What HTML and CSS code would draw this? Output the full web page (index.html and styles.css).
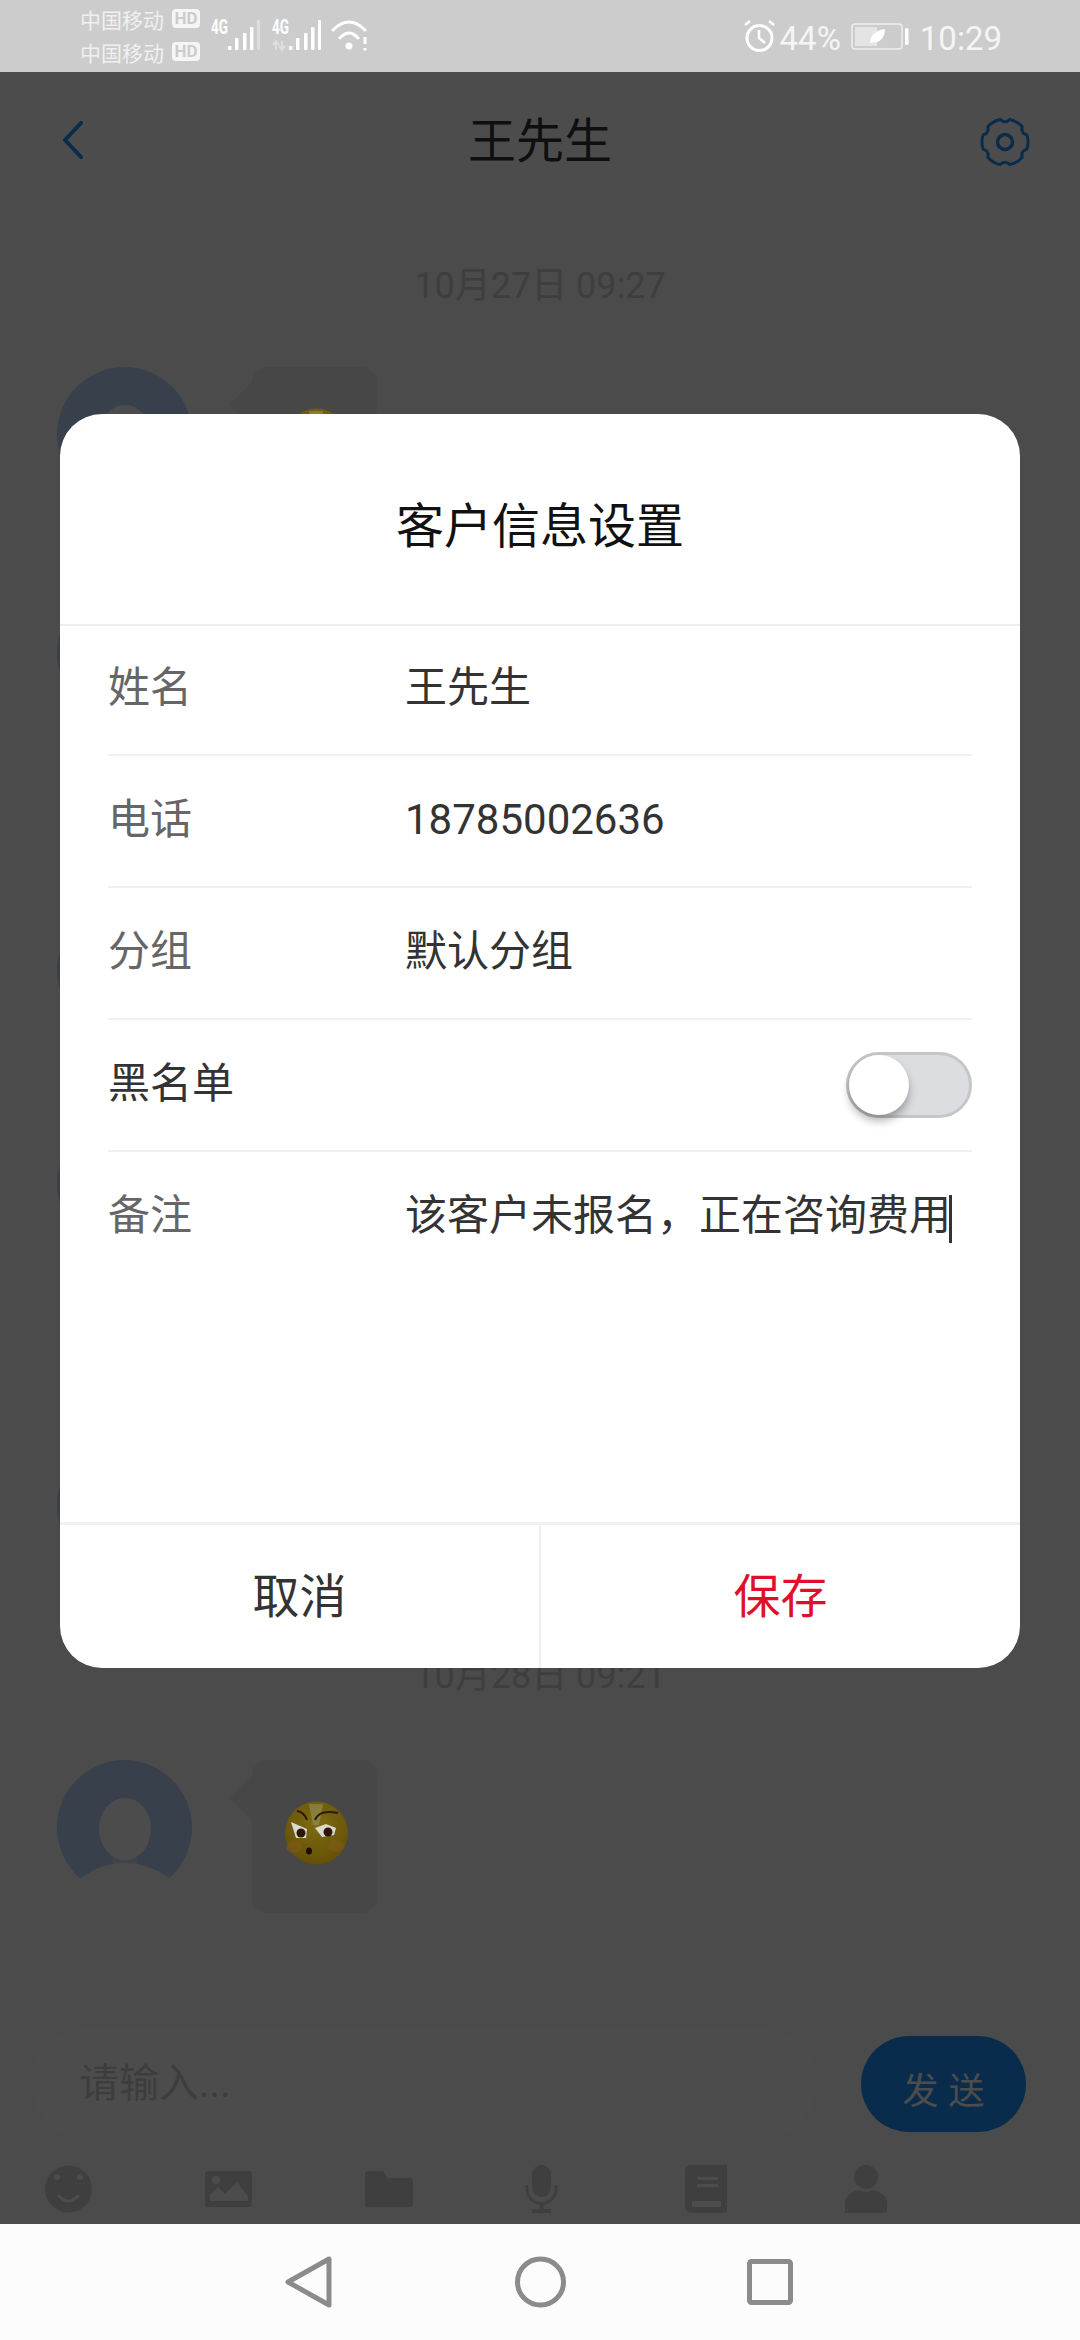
FILE: index.html
```html
<!DOCTYPE html>
<html lang="zh-CN">
<head>
  <meta charset="UTF-8">
  <meta name="viewport" content="width=device-width, initial-scale=1.0">
  <title>王先生</title>
  <link rel="stylesheet" href="styles.css">
</head>
<body>
  <!-- shared shapes -->
  <svg class="defs" width="0" height="0">
    <defs>
      <symbol id="avatar" viewBox="0 0 135 135">
        <circle cx="67.500" cy="67.500" r="67.500" fill="#bcd6ff"/>
        <rect x="56" y="90" width="24" height="20" fill="#d8e4f8"/>
        <ellipse cx="68" cy="69" rx="26" ry="31" fill="#fff"/>
        <path d="M23.500 118Q66 88 111.500 117V135H23.500Z" fill="#fafafa"/>
      </symbol>
      <radialGradient id="face" cx="50%" cy="35%" r="70%">
        <stop offset="0" stop-color="#7f6c12"/>
        <stop offset="1" stop-color="#614e05"/>
      </radialGradient>
      <symbol id="emoji" viewBox="0 0 63 64">
        <circle cx="31.500" cy="32" r="31.500" fill="url(#face)"/>
        <path d="M24 3H38L34 24H28Z" fill="#8f8a50" opacity=".7"/>
        <ellipse cx="9" cy="46" rx="8" ry="6" fill="#84591a" opacity=".5"/>
        <ellipse cx="51" cy="45" rx="8" ry="6" fill="#84591a" opacity=".5"/>
        <path d="M6 21L22 28L21 37H11Z" fill="#d9d9d0"/>
        <path d="M30 27L41 23L51 27L49 34L37 36Z" fill="#d9d9d0"/>
        <circle cx="16" cy="32" r="4.500" fill="#2e1606"/>
        <circle cx="43" cy="31" r="4.500" fill="#2e1606"/>
        <path d="M12 10Q19 11 22 19M30 19Q34 8 53 12" fill="none" stroke="#2e1a06" stroke-width="2"/>
        <ellipse cx="24" cy="50" rx="3" ry="3.500" fill="#1c0c04"/>
      </symbol>
    </defs>
  </svg>

  <div class="screen">
    <div class="status-bar">
      <div class="carriers">
        <div class="carrier">中国移动<span class="hd">HD</span></div>
        <div class="carrier">中国移动<span class="hd">HD</span></div>
      </div>
      <svg class="st-icon sim-one" width="49" height="72" viewBox="0 0 49 72">
        <text x="0" y="34" class="net" textLength="17" lengthAdjust="spacingAndGlyphs">4G</text>
        <g fill="#fff">
          <rect x="17" y="46" width="3.500" height="4" rx="1"/>
          <rect x="24" y="38" width="3.500" height="12" rx="1"/>
          <rect x="32" y="33" width="3.500" height="17" rx="1"/>
          <rect x="39" y="27" width="3.500" height="23" rx="1"/>
          <rect x="46" y="20" width="3" height="30" rx="1" opacity=".35"/>
        </g>
      </svg>
      <svg class="st-icon sim-two" width="49" height="72" viewBox="0 0 49 72">
        <text x="0" y="34" class="net" textLength="17" lengthAdjust="spacingAndGlyphs">4G</text>
        <path d="M4 50V42M1 45L4 41L7 45M10 41V49M7 46L10 50L13 46" fill="none" stroke="#fff" stroke-width="2" opacity=".35"/>
        <g fill="#fff">
          <rect x="17" y="46" width="3.500" height="4" rx="1"/>
          <rect x="24" y="38" width="3.500" height="12" rx="1"/>
          <rect x="32" y="33" width="3.500" height="17" rx="1"/>
          <rect x="39" y="27" width="3.500" height="23" rx="1"/>
          <rect x="46" y="20" width="3" height="30" rx="1"/>
        </g>
      </svg>
      <svg class="st-icon wifi" width="37" height="72" viewBox="0 0 37 72">
        <path d="M3 30Q19 14 35 30M10 38Q19 28 28 38" fill="none" stroke="#fff" stroke-width="3" stroke-linecap="round"/>
        <circle cx="19" cy="46" r="3.500" fill="#fff"/>
        <path d="M35 37V44M35 48V50.500" stroke="#fff" stroke-width="3"/>
      </svg>
      <div class="st-right">
        <svg class="st-icon" width="31" height="72" viewBox="0 0 31 72">
          <circle cx="15.500" cy="38" r="12.500" fill="none" stroke="#fff" stroke-width="3"/>
          <path d="M1 25L6 21M30 25L25 21M15 30V38L21 43" fill="none" stroke="#fff" stroke-width="2.500"/>
        </svg>
        <span class="st-text pct">44%</span>
        <svg class="st-icon batt" width="59" height="72" viewBox="0 0 59 72">
          <rect x="1" y="24" width="50" height="25" rx="3" fill="none" stroke="#eee" stroke-width="1.500"/>
          <rect x="4" y="27" width="22" height="19" fill="#e4e4e4"/>
          <rect x="54" y="28" width="3.500" height="17" rx="1.500" fill="#fff"/>
          <path d="M19 44C19 34 26 30 34 29C34 38 28 44 21 42Z" fill="#fff"/>
        </svg>
        <span class="st-text time">10:29</span>
      </div>
    </div>

    <div class="top-bar">
      <svg class="back" width="21" height="38" viewBox="0 0 21 38">
        <path d="M19 2L3 19L19 36" fill="none" stroke="#1e90ff" stroke-width="4" stroke-linecap="round" stroke-linejoin="round"/>
      </svg>
      <h1 class="top-title">王先生</h1>
      <svg class="gear" width="50" height="50" viewBox="-25 -25 50 50">
        <path d="M-4.800-22.500Q0-18 4.800-22.500A23 23 0 0 1 17.100-15.400Q15.600-9 21.900-7.100A23 23 0 0 1 21.900 7.100Q15.600 9 17.100 15.400A23 23 0 0 1 4.800 22.500Q0 18-4.800 22.500A23 23 0 0 1-17.100 15.400Q-15.600 9-21.900 7.100A23 23 0 0 1-21.900-7.100Q-15.600-9-17.100-15.400A23 23 0 0 1-4.800-22.500Z" fill="none" stroke="#1e90ff" stroke-width="3"/>
        <circle r="7.500" fill="none" stroke="#1e90ff" stroke-width="3.500"/>
      </svg>
    </div>

    <div class="chat">
      <div class="stamp stamp-first">10月27日 09:27</div>
      <div class="msg gap-a">
        <svg class="avatar"><use href="#avatar"/></svg>
        <div class="bubble"><svg class="emoji"><use href="#emoji"/></svg></div>
      </div>
      <div class="msg gap-b">
        <svg class="avatar"><use href="#avatar"/></svg>
        <div class="bubble"></div>
      </div>
      <div class="msg gap-c">
        <svg class="avatar"><use href="#avatar"/></svg>
        <div class="bubble"></div>
      </div>
      <div class="msg gap-b2">
        <svg class="avatar"><use href="#avatar"/></svg>
        <div class="bubble"></div>
      </div>
      <div class="msg">
        <svg class="avatar"><use href="#avatar"/></svg>
        <div class="bubble"></div>
      </div>
      <div class="stamp">10月28日 09:21</div>
      <div class="msg">
        <svg class="avatar"><use href="#avatar"/></svg>
        <div class="bubble"><svg class="emoji"><use href="#emoji"/></svg></div>
      </div>
    </div>

    <div class="composer">
      <div class="input-row">
        <div class="input-pill">请输入...</div>
        <div class="send"><span>发送</span></div>
      </div>
      <div class="tools">
        <svg class="tool" viewBox="0 0 48 48">
          <circle cx="23.500" cy="24" r="23.500" fill="#d3d3d3"/>
          <circle cx="12" cy="12" r="3" fill="#fff"/>
          <circle cx="35" cy="12" r="3" fill="#fff"/>
          <path d="M13 30Q23.500 42 34 30" fill="none" stroke="#fff" stroke-width="3"/>
        </svg>
        <svg class="tool" viewBox="0 0 48 48">
          <rect x="0" y="6" width="47" height="36" rx="3" fill="#d3d3d3"/>
          <circle cx="11" cy="15" r="4" fill="#fff"/>
          <path d="M5 36V30L13 22L20 29L32 17L43 32V36Z" fill="#fff"/>
        </svg>
        <svg class="tool" viewBox="0 0 48 48">
          <path d="M3 6H18L23 13H45A3 3 0 0 1 48 16V39A3 3 0 0 1 45 42H3A3 3 0 0 1 0 39V9A3 3 0 0 1 3 6Z" fill="#d3d3d3"/>
        </svg>
        <svg class="tool" viewBox="0 0 48 48">
          <rect x="7" y="0" width="19" height="32" rx="9.500" fill="#d3d3d3"/>
          <path d="M2 20V24A14.500 14.500 0 0 0 31 24V20" fill="none" stroke="#d3d3d3" stroke-width="3"/>
          <rect x="14.500" y="38" width="4" height="7" fill="#d3d3d3"/>
          <rect x="7" y="44" width="19" height="4" fill="#d3d3d3"/>
        </svg>
        <svg class="tool" viewBox="0 0 48 48">
          <path d="M6 0H42V48H6A6 6 0 0 1 0 42V6A6 6 0 0 1 6 0Z" fill="#d3d3d3"/>
          <rect x="12" y="12" width="21" height="3" fill="#fff"/>
          <rect x="12" y="19" width="21" height="3" fill="#fff"/>
          <rect x="7" y="36" width="29" height="6" fill="#fff"/>
        </svg>
        <svg class="tool" viewBox="0 0 48 48">
          <ellipse cx="21" cy="12" rx="12" ry="12" fill="#d3d3d3"/>
          <path d="M0 48V38C0 30 8 26 15 25Q21 29 27 25C34 26 42 30 42 38V48Z" fill="#d3d3d3"/>
        </svg>
      </div>
    </div>

    <div class="nav-bar">
      <svg class="nav-icon" viewBox="0 0 60 60"><path d="M49 7V53L8 30Z" fill="none" stroke="#8b8b8b" stroke-width="5" stroke-linejoin="round"/></svg>
      <svg class="nav-icon" viewBox="0 0 60 60"><circle cx="30.500" cy="30" r="23" fill="none" stroke="#8b8b8b" stroke-width="5"/></svg>
      <svg class="nav-icon" viewBox="0 0 60 60"><rect x="9.500" y="9.500" width="41" height="41" rx="2" fill="none" stroke="#8b8b8b" stroke-width="5"/></svg>
    </div>

    <div class="scrim"></div>

    <!-- dialog -->
    <div class="dialog">
      <div class="dialog-title">客户信息设置</div>
      <div class="rows">
        <div class="row row-first"><span class="label">姓名</span><span class="value">王先生</span></div>
        <div class="row"><span class="label">电话</span><span class="value value-num">18785002636</span></div>
        <div class="row"><span class="label">分组</span><span class="value">默认分组</span></div>
        <div class="row"><span class="label label-dark">黑名单</span>
          <div class="switch"><div class="knob"></div></div>
        </div>
        <div class="row row-note"><span class="label">备注</span><span class="value">该客户未报名，正在咨询费用<i class="caret"></i></span></div>
      </div>
      <div class="dialog-foot">
        <div class="foot-btn">取消</div>
        <div class="foot-btn foot-save">保存</div>
      </div>
    </div>
  </div>
</body>
</html>
```

FILE: styles.css
```css
* { box-sizing: border-box; }
html, body { margin: 0; padding: 0; }
body { font-family: Roboto, "Noto Sans CJK SC", sans-serif; background: #fff; }
.defs { position: absolute; }
.screen { position: relative; width: 1080px; height: 2340px; overflow: hidden; display: flex; flex-direction: column; }

/* status bar */
.status-bar { height: 72px; flex: none; display: flex; background: #ccc; padding: 0 78px 0 80px; color: #f5f5f5; z-index: 20; }
.carriers { width: 120px; margin-top: 2px; margin-right: 11px; }
.carrier { display: flex; align-items: center; height: 33px; font-size: 21px; color: #f0f0f0; white-space: nowrap; }
.hd { display: block; width: 28px; height: 19px; margin-left: 8px; border-radius: 4px; background: #f5f5f5; color: #ccc; font-size: 17px; line-height: 19px; font-weight: 700; text-align: center; }
.st-icon { display: block; flex: none; }
.sim-one { margin-right: 12px; }
.sim-two { margin-right: 9px; }
.net { font-family: Roboto, sans-serif; font-size: 21px; font-weight: 700; fill: #fff; }
.st-right { margin-left: auto; display: flex; }
.st-text { font-size: 33px; line-height: 72px; margin-top: 3px; }
.pct { margin-right: 10px; margin-left: 5px; }
.time { margin-left: 10px; }

/* top bar */
.top-bar { height: 136px; flex: none; display: grid; grid-template-columns: 1fr auto 1fr; align-items: center; padding: 0 50px; background: #fff; }
.back { margin-left: 12px; }
.top-title { margin: 0 0 6px; font-size: 48px; font-weight: 400; color: #333; }
.gear { justify-self: end; margin-top: 3px; }

/* chat */
.chat { flex: 1; min-height: 0; overflow: hidden; background: #fafafa; }
.stamp { height: 30px; margin: 70px 0 69px; font-size: 36px; line-height: 30px; color: #d0d0d0; text-align: center; }
.stamp-first { margin-top: 63px; margin-bottom: 66px; }
.msg { display: flex; padding-left: 57px; }
.gap-a { margin-bottom: 65px; }
.gap-b { margin-bottom: 165px; }
.gap-c { margin-bottom: 60px; }
.gap-b2 { margin-bottom: 169px; }
.avatar { display: block; width: 135px; height: 135px; margin-right: 60px; flex: none; }
.bubble { position: relative; width: 125px; height: 153px; padding: 41px 29px 48px 33px; border-radius: 15px; background: #eee; }
.bubble::before { content: ""; position: absolute; left: -16px; top: 22px; width: 32px; height: 32px; background: #eee; transform: rotate(45deg); }
.emoji { position: relative; z-index: 11; display: block; width: 63px; height: 64px; }

/* input */
.composer { height: 204px; flex: none; padding: 10px 0 0; background: #fbfbfb; }
.input-row { display: flex; align-items: center; padding: 0 54px 0 31px; height: 107px; }
.input-pill { width: 786px; height: 107px; padding-left: 48px; border-radius: 54px; background: #fff; font-size: 40px; line-height: 107px; color: #ccc; }
.send { width: 165px; height: 96px; margin-left: auto; border-radius: 48px; background: #1e90ff; display: flex; align-items: center; justify-content: center; color: #fff; font-size: 36px; letter-spacing: 10px; padding-top: 9px; padding-left: 10px; }
.tools { display: flex; gap: 112px; padding: 28px 0 0 45px; }
.tool { display: block; width: 48px; height: 48px; flex: none; }

/* nav */
.nav-bar { height: 116px; flex: none; display: flex; align-items: center; justify-content: center; gap: 170px; background: #fcfcfc; z-index: 20; }
.nav-icon { display: block; width: 60px; height: 60px; }

/* dialog */
.scrim { position: absolute; left: 0; right: 0; top: 72px; bottom: 116px; background: rgba(0, 0, 0, .7); z-index: 10; }
.dialog { position: absolute; left: 60px; top: 414px; width: 960px; height: 1254px; z-index: 12; display: flex; flex-direction: column; background: #fff; border-radius: 42px; overflow: hidden; }
.dialog-title { height: 212px; flex: none; padding-top: 6px; display: flex; align-items: center; justify-content: center; font-size: 48px; color: #111; border-bottom: 2px solid #eee; }
.rows { flex: 1; display: flex; flex-direction: column; padding: 0 48px; }
.row { height: 132px; flex: none; display: flex; align-items: center; padding-bottom: 12px; border-bottom: 2px solid #f0f0f0; font-size: 42px; color: #333; }
.row-first { height: 130px; padding-bottom: 14px; }
.row-note { flex: 1; align-items: flex-start; padding-top: 29px; border-bottom: 0; }
.label { width: 297px; flex: none; color: #666; }
.label-dark { color: #333; }
.value { white-space: nowrap; }
.value-num { margin-top: 8px; }
.caret { display: inline-block; width: 3px; height: 48px; margin-left: -2px; background: #333; vertical-align: middle; }
.switch { margin-left: auto; margin-top: 12px; width: 126px; height: 66px; display: flex; align-items: center; border: 3px solid #c4c6c8; border-radius: 33px; background: #dcdde0; }
.knob { width: 60px; height: 60px; border-radius: 50%; background: #fff; box-shadow: 0 6px 8px rgba(0, 0, 0, .3); }
.dialog-foot { height: 146px; flex: none; display: flex; border-top: 3px solid #eef0f3; }
.foot-btn { flex: 1; display: flex; align-items: center; justify-content: center; padding-bottom: 9px; font-size: 47px; color: #333; }
.foot-btn:first-child { border-right: 2px solid #f0f0f0; }
.foot-save { color: #e0102a; }
```
